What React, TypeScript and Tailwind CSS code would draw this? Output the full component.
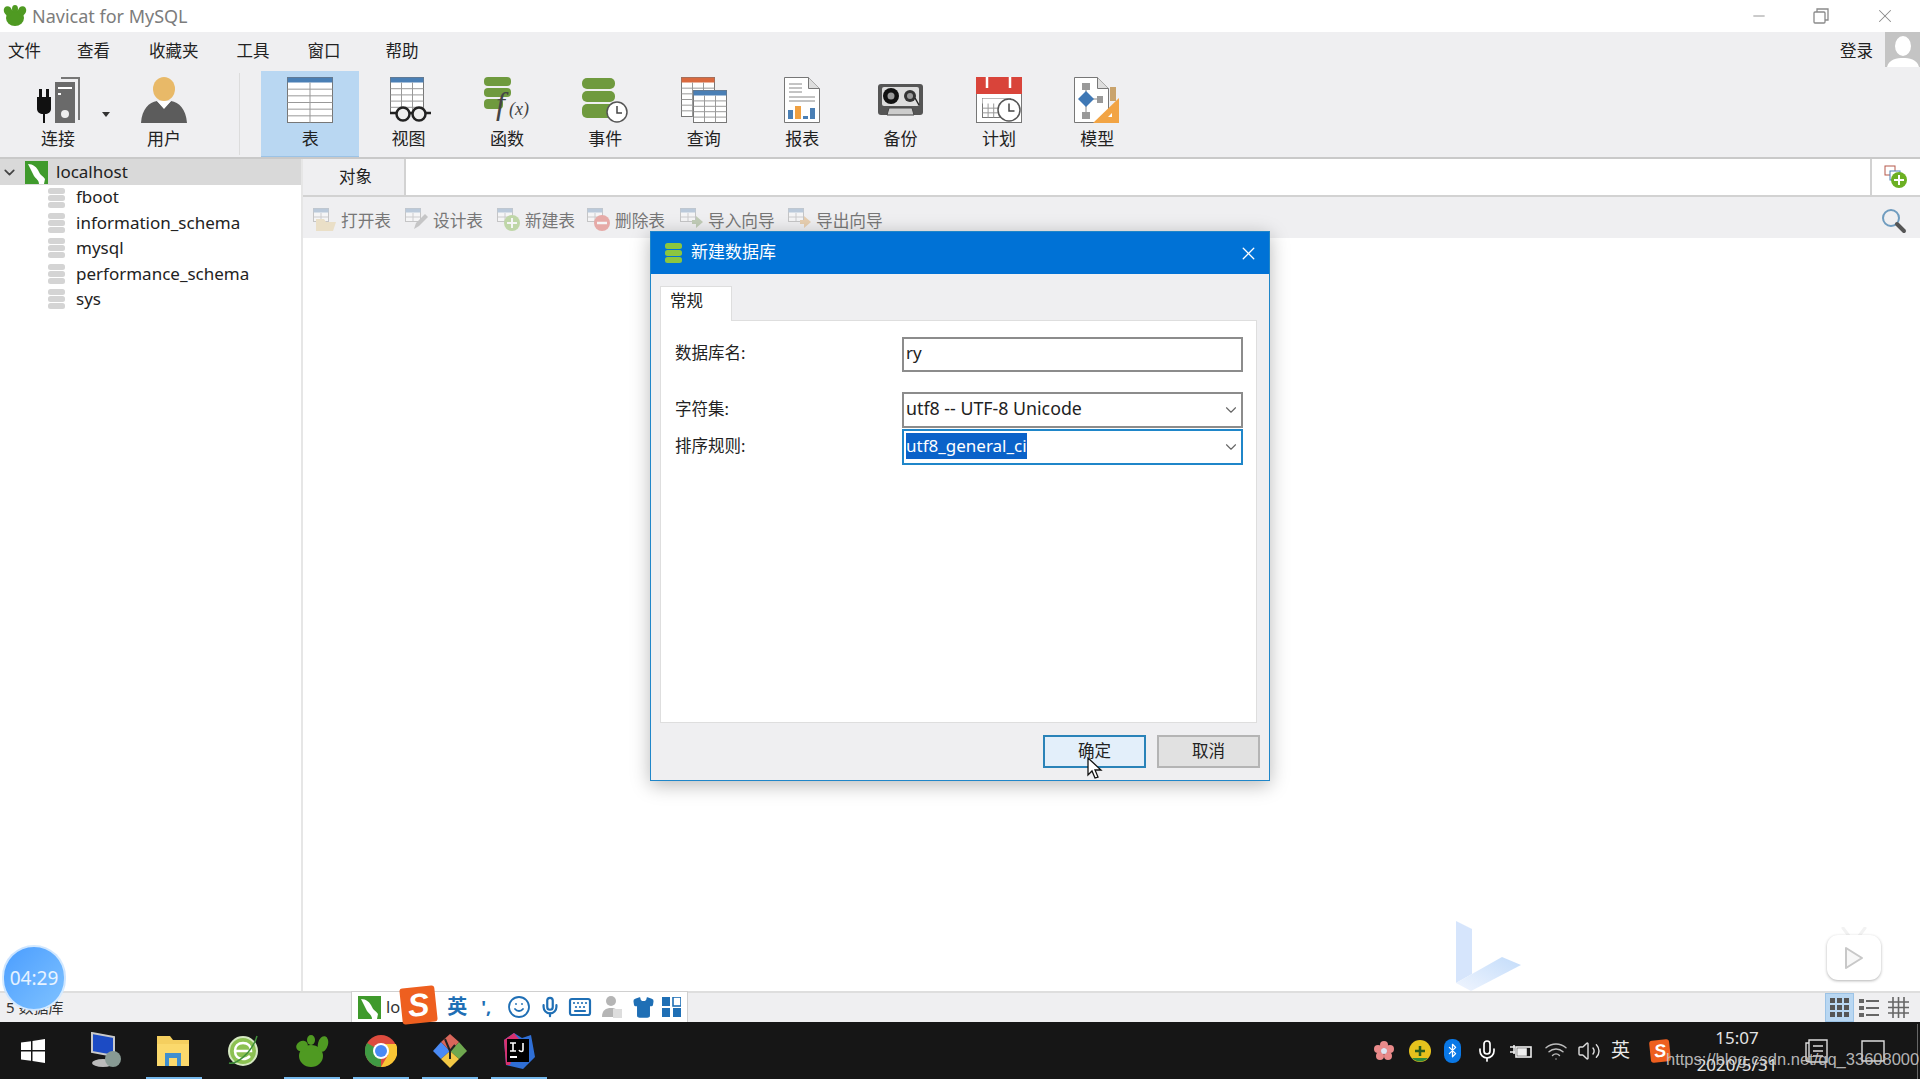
import { ChevronDown, X, Minus, Smile, Mic, Keyboard, Shirt, Volume2, Wifi, Bluetooth } from "lucide-react";
import type { ReactNode } from "react";

const Grid = ({ x, y, w, h, cols, rows, head = "#4a7fb5" }: { x: number; y: number; w: number; h: number; cols: number; rows: number; head?: string }) => (
  <g>
    <rect x={x} y={y} width={w} height={h} fill="#fff" stroke="#777" />
    <rect x={x} y={y} width={w} height={5} fill={head} />
    {Array.from({ length: rows - 1 }, (_, i) => (
      <line key={i} x1={x} x2={x + w} y1={y + 5 + ((h - 5) / rows) * (i + 1)} y2={y + 5 + ((h - 5) / rows) * (i + 1)} stroke="#999" />
    ))}
    {Array.from({ length: cols - 1 }, (_, i) => (
      <line key={i} y1={y + 5} y2={y + h} x1={x + (w / cols) * (i + 1)} x2={x + (w / cols) * (i + 1)} stroke="#999" />
    ))}
  </g>
);

const Svg = ({ children }: { children: ReactNode }) => (
  <svg width="46" height="46" viewBox="0 0 46 46">{children}</svg>
);

const Cyl = ({ fill = "#6f9a3e" }: { fill?: string }) => (
  <g fill={fill}>
    <rect x="0" y="1" width="33" height="11" rx="5" />
    <rect x="0" y="14" width="33" height="11" rx="5" />
    <rect x="0" y="27" width="33" height="14" rx="5" />
  </g>
);

const Clock = ({ cx, cy, r }: { cx: number; cy: number; r: number }) => (
  <g>
    <circle cx={cx} cy={cy} r={r} fill="#fff" stroke="#555" strokeWidth="1.5" />
    <path d={`M${cx} ${cy - r * 0.6}V${cy + 1}H${cx + r * 0.5}`} fill="none" stroke="#444" strokeWidth="1.5" />
  </g>
);

const tools: { label: string; icon: ReactNode; on?: boolean }[] = [
  { label: "表", on: true, icon: <Svg><Grid x={0.5} y={0.5} w={45} h={45} cols={2} rows={6} /></Svg> },
  {
    label: "视图",
    icon: (
      <Svg>
        <Grid x={4.5} y={0.5} w={33} h={36} cols={3} rows={5} />
        <g fill="#eee" stroke="#222" strokeWidth="2.5">
          <circle cx="17" cy="37" r="6.5" />
          <circle cx="33" cy="37" r="6.5" />
          <path d="M23 36h4M10 36H4M40 36h5" />
        </g>
      </Svg>
    ),
  },
  {
    label: "函数",
    icon: (
      <Svg>
        <g fill="#6f9a3e">
          <rect x="0" y="0" width="27" height="9" rx="4" />
          <rect x="0" y="11" width="27" height="9" rx="4" />
          <rect x="0" y="22" width="19" height="10" rx="4" />
        </g>
        <text x="12" y="37" fontFamily="Liberation Serif" fontStyle="italic" fontSize="32" fill="#444">f</text>
        <text x="25" y="38" fontFamily="Liberation Serif" fontStyle="italic" fontSize="18" fill="#444">(x)</text>
      </Svg>
    ),
  },
  { label: "事件", icon: <Svg><Cyl /><Clock cx={35} cy={35} r={10} /></Svg> },
  {
    label: "查询",
    icon: (
      <Svg>
        <Grid x={0.5} y={0.5} w={33} h={39} cols={3} rows={6} head="#d9693f" />
        <Grid x={12.5} y={13.5} w={33} h={32} cols={3} rows={5} />
      </Svg>
    ),
  },
  {
    label: "报表",
    icon: (
      <Svg>
        <path d="M5.5.5h24l11 11v34h-35z" fill="#fff" stroke="#777" />
        <path d="M29.5.5v11h11" fill="#ddd" stroke="#777" />
        <path d="M10 7h13M10 11h13M10 15h13M10 20h26M10 24h26" stroke="#888" />
        <rect x="9" y="33" width="5" height="9" fill="#4a7fb5" />
        <rect x="16" y="29" width="6" height="13" fill="#f0a040" />
        <rect x="24" y="39" width="5" height="3" fill="#4a7fb5" />
        <rect x="31" y="31" width="5" height="11" fill="#4a7fb5" />
      </Svg>
    ),
  },
  {
    label: "备份",
    icon: (
      <Svg>
        <rect x="0" y="7" width="45" height="31" rx="3" fill="#555" />
        <rect x="4" y="10" width="37" height="19" rx="2" fill="#ddd" />
        <circle cx="13" cy="19" r="8" fill="#111" />
        <circle cx="13" cy="19" r="3.5" fill="#999" />
        <circle cx="32" cy="19" r="6" fill="#333" />
        <circle cx="32" cy="19" r="3" fill="#999" />
        <path d="M37 21l4 7" stroke="#222" strokeWidth="1.5" />
        <path d="M9 38l2-7h23l2 7z" fill="#ccc" stroke="#444" />
      </Svg>
    ),
  },
  {
    label: "计划",
    icon: (
      <Svg>
        <rect x="0.5" y="0.5" width="45" height="45" fill="#fff" stroke="#777" />
        <rect x="0" y="0" width="46" height="17" fill="#d9443a" />
        <path d="M11 0v11M34 0v11" stroke="#fff" strokeWidth="2.5" />
        <Grid x={6.5} y={21.5} w={28} h={19} cols={5} rows={3} head="#fff" />
        <Clock cx={33} cy={33} r={11} />
      </Svg>
    ),
  },
  {
    label: "模型",
    icon: (
      <Svg>
        <path d="M.5.5h23l11 11v34H.5z" fill="#fff" stroke="#777" />
        <path d="M23.5.5v11h11" fill="#ddd" stroke="#777" />
        <path d="M12 8v30M12 22h14" stroke="#888" />
        <rect x="8" y="6" width="8" height="7" fill="#999" />
        <rect x="8" y="35" width="8" height="7" fill="#999" />
        <rect x="23" y="19" width="6" height="7" fill="#999" />
        <path d="M12 14l8 8-8 8-8-8z" fill="#3f78b5" />
        <rect x="36" y="10" width="6" height="14" fill="#c9a36c" />
        <path d="M45 21v25H19z" fill="#f2a444" />
        <path d="M38 36v4h-4z" fill="#fff" />
      </Svg>
    ),
  },
];

const MiniTable = ({ children }: { children?: ReactNode }) => (
  <svg width="24" height="24" viewBox="0 0 24 24" className="opacity-40">
    <rect x="0.5" y="0.5" width="15" height="13" fill="#fff" stroke="#888" />
    <rect x="0.5" y="0.5" width="15" height="4" fill="#6d93b8" />
    <path d="M8 5v8M1 9h14" stroke="#999" />
    {children}
  </svg>
);

const actions: { label: string; w: string; icon: ReactNode }[] = [
  { label: "打开表", w: "w-[92px]", icon: <MiniTable><path d="M3 11h8l2 3h10l-3 9H3z" fill="#e4c88a" /></MiniTable> },
  { label: "设计表", w: "w-[92px]", icon: <MiniTable><path d="M9 21l2-6 9-9 3 3-9 9z" fill="#888" /></MiniTable> },
  { label: "新建表", w: "w-[90px]", icon: <MiniTable><circle cx="15" cy="15" r="8" fill="#7ab33c" /><path d="M15 10v10M10 15h10" stroke="#fff" strokeWidth="2" /></MiniTable> },
  { label: "删除表", w: "w-[93px]", icon: <MiniTable><circle cx="15" cy="15" r="8" fill="#d9443a" /><path d="M10 15h10" stroke="#fff" strokeWidth="2.5" /></MiniTable> },
  { label: "导入向导", w: "w-[108px]", icon: <MiniTable><path d="M23 14l-7-6v4h-4v4h4v4z" fill="#7f9a62" /></MiniTable> },
  { label: "导出向导", w: "w-auto", icon: <MiniTable><path d="M23 14l-7-6v4h-4v4h4v4z" fill="#e0a050" /></MiniTable> },
];

const databases = ["fboot", "information_schema", "mysql", "performance_schema", "sys"];

const DbIcon = () => (
  <svg width="17" height="20" viewBox="0 0 17 20">
    <g fill="#d4d4d4">
      <rect x="0" y="0" width="17" height="6" rx="2.5" />
      <rect x="0" y="7" width="17" height="6" rx="2.5" />
      <rect x="0" y="14" width="17" height="6" rx="2.5" />
    </g>
  </svg>
);

const MysqlIcon = ({ className = "" }: { className?: string }) => (
  <svg viewBox="0 0 23 23" className={className}>
    <rect width="23" height="23" fill="#3f9a2c" />
    <path d="M3 3c5 0 9 3 11 8 1 3 4 4 6 7l-1 5h-5c0-4-3-5-5-8C7 11 5 7 3 3z" fill="#fff" />
  </svg>
);

const SogouIcon = ({ size, font }: { size: string; font: string }) => (
  <div className={`${size} ${font} -rotate-6 rounded-[3px] bg-[#ee5f1f] flex items-center justify-center font-black italic text-white font-['Liberation_Sans',sans-serif]`}>
    S
  </div>
);

function Dialog() {
  return (
    <div className="absolute left-[650px] top-[231px] w-[620px] h-[550px] border border-[#1f86c9] bg-[#efeff1] shadow-[0_4px_18px_rgba(0,0,0,0.28)] flex flex-col">
      <div className="h-[42px] bg-[#0072d6] flex items-center pl-[14px] pr-[10px] text-white">
        <svg width="17" height="20" viewBox="0 0 17 20" className="mr-[9px]">
          <g fill="#8cc63f">
            <rect y="0" width="17" height="6" rx="2.5" />
            <rect y="7" width="17" height="6" rx="2.5" />
            <rect y="14" width="17" height="6" rx="2.5" />
          </g>
        </svg>
        <span className="text-[17px] pb-[2px]">新建数据库</span>
        <X className="ml-auto" size={21} strokeWidth={1.5} />
      </div>
      <div className="flex-1 flex flex-col pl-[9px] pr-[12px] pt-[12px]">
        <div className="w-[72px] h-[35px] -mb-px z-10 bg-white border border-b-0 border-[#dedede] text-[16.5px] pl-[9px] pt-[2px] text-[#222]">常规</div>
        <div className="h-[403px] bg-white border border-[#dedede] pt-[15px] pl-[14px] pr-[13px] text-[#222]">
          <div className="flex items-center h-[36px]">
            <span className="w-[227px] text-[16.5px] pb-[1px]">数据库名:</span>
            <div className="flex-1 h-[35px] border-2 border-[#8c8c8c] flex items-center pl-[2px] pb-[2px] text-[17px]">ry</div>
          </div>
          <div className="flex items-center h-[36px] mt-[20px]">
            <span className="w-[227px] text-[16.5px] pb-[1px]">字符集:</span>
            <div className="flex-1 h-[36px] border-2 border-[#8c8c8c] flex items-center pl-[2px] pr-[1px] text-[17.8px]">
              <span className="pb-[3px]">utf8 -- UTF-8 Unicode</span>
              <ChevronDown className="ml-auto text-[#666]" size={18} strokeWidth={1.5} />
            </div>
          </div>
          <div className="flex items-center h-[36px] mt-[1px]">
            <span className="w-[227px] text-[16.5px] pb-[1px]">排序规则:</span>
            <div className="flex-1 h-[36px] border-2 border-[#1f86c9] flex items-center pl-[2px] pr-[1px] text-[17px]">
              <span className="bg-[#0a62c9] text-white leading-[26px] mb-[3px]">utf8_general_ci</span>
              <ChevronDown className="ml-auto text-[#666]" size={18} strokeWidth={1.5} />
            </div>
          </div>
        </div>
        <div className="flex justify-end gap-[11px] mt-[12px] -mr-[3px] text-[16.5px] text-[#222]">
          <button className="w-[103px] h-[33px] border-2 border-[#2a83b8] bg-[#e3effa]">确定</button>
          <button className="w-[103px] h-[33px] border-2 border-[#b4b4b4] bg-[#e1e1e1]">取消</button>
        </div>
      </div>
    </div>
  );
}

export default function App() {
  return (
    <div className="relative w-[1920px] h-[1079px] overflow-hidden bg-white flex flex-col font-['Noto_Sans','Noto_Sans_CJK_SC',sans-serif] text-[#222]">
      {/* title bar */}
      <div className="h-[32px] shrink-0 flex items-center pl-[3px] text-[#7c7c7c]">
        <svg width="24" height="22" viewBox="0 0 24 22" className="mr-[5px]">
          <g fill="#4f9a22">
            <ellipse cx="12" cy="13" rx="9" ry="8" />
            <ellipse cx="5" cy="6" rx="4" ry="5" transform="rotate(-25 5 6)" />
            <ellipse cx="19" cy="6" rx="4" ry="5" transform="rotate(25 19 6)" />
            <ellipse cx="12" cy="4" rx="3" ry="4" />
          </g>
        </svg>
        <span className="text-[18px]">Navicat for MySQL</span>
        <div className="ml-auto flex items-center text-[#8a8a8a]">
          <Minus size={18} strokeWidth={1.2} />
          <svg width="16" height="16" viewBox="0 0 16 16" className="ml-[45px]" fill="none" stroke="currentColor" strokeWidth="1.3">
            <rect x="1" y="4" width="11" height="11" rx="1" />
            <path d="M4 4V1h11v11h-3" />
          </svg>
          <X className="ml-[45px] mr-[24px]" size={22} strokeWidth={1.1} />
        </div>
      </div>

      {/* menu + toolbar */}
      <div className="h-[127px] shrink-0 bg-[#efeff1] border-b-2 border-[#c9c9c9] flex flex-col">
        <div className="h-[39px] shrink-0 flex items-center text-[16.5px] relative">
          <span className="ml-[8px]">文件</span>
          <span className="ml-[36px]">查看</span>
          <span className="ml-[39px]">收藏夹</span>
          <span className="ml-[38px]">工具</span>
          <span className="ml-[38px]">窗口</span>
          <span className="ml-[45px]">帮助</span>
          <span className="ml-auto mr-[47px]">登录</span>
          <div className="absolute right-0 top-0 w-[35px] h-[35px] bg-[#c4c4c4] overflow-hidden">
            <svg viewBox="0 0 35 35" width="35" height="35">
              <ellipse cx="18" cy="14" rx="8" ry="10" fill="#fff" />
              <path d="M2 35c2-8 10-9 16-9s14 1 16 9z" fill="#fff" />
            </svg>
          </div>
        </div>
        <div className="flex-1 flex items-stretch">
          <div className="w-[98px] ml-[9px] flex flex-col items-center pt-[6px]">
            <svg width="50" height="46" viewBox="0 0 50 46" className="ml-[2px]">
              <path d="M3 20h2v-8h3v8h4v-8h3v8h2v12c0 3-3 5-6 5v9h-2v-9c-3 0-6-2-6-5z" fill="#111" />
              <rect x="21" y="5" width="20" height="41" fill="#6a6a6a" />
              <path d="M27 1h18v42" fill="none" stroke="#777" strokeWidth="2" />
              <rect x="24" y="10" width="14" height="2" fill="#fff" />
              <rect x="24" y="16" width="3" height="2" fill="#fff" />
              <circle cx="31" cy="37" r="4" fill="#eee" />
            </svg>
            <span className="text-[17px] leading-[26px] mt-[3px]">连接</span>
          </div>
          <svg width="8" height="5" viewBox="0 0 8 5" className="mt-[41px] -ml-[5px]"><path d="M0 0h8L4 5z" fill="#333" /></svg>
          <div className="w-[98px] ml-[5px] flex flex-col items-center pt-[6px]">
            <svg width="46" height="46" viewBox="0 0 46 46">
              <ellipse cx="23" cy="12" rx="11" ry="12" fill="#e8b968" />
              <path d="M0 46c1-14 8-21 16-22l7 7 7-7c8 1 15 8 16 22z" fill="#5c5c5c" />
              <path d="M16 24h14l-7 8z" fill="#fff" />
            </svg>
            <span className="text-[17px] leading-[26px] mt-[3px]">用户</span>
          </div>
          <div className="w-px bg-[#dcdcdc] ml-[26px] mr-[21px] my-[2px]" />
          {tools.map((t) => (
            <div key={t.label} className={`w-[98.4px] flex flex-col items-center pt-[6px] ${t.on ? "bg-[#b9d7f2] border-b border-[#9cc3e6]" : ""}`}>
              {t.icon}
              <span className="text-[17px] leading-[26px] mt-[3px]">{t.label}</span>
            </div>
          ))}
        </div>
      </div>

      {/* main */}
      <div className="flex-1 flex min-h-0">
        <aside className="w-[303px] shrink-0 border-r-2 border-[#e6e6e6] text-[17px]">
          <div className="h-[26px] bg-[#d9d9d9] flex items-center pl-[1px]">
            <ChevronDown size={17} strokeWidth={2.4} className="text-[#444]" />
            <MysqlIcon className="w-[23px] h-[23px] ml-[7px]" />
            <span className="ml-[8px]">localhost</span>
          </div>
          {databases.map((d) => (
            <div key={d} className="h-[25.4px] flex items-center pl-[48px]">
              <DbIcon />
              <span className="ml-[11px] pb-[1px]">{d}</span>
            </div>
          ))}
        </aside>
        <div className="flex-1 flex flex-col min-w-0">
          <div className="h-[38px] shrink-0 flex border-b-2 border-[#d2d2d2]">
            <div className="w-[101px] bg-[#efeff1] flex items-center justify-center pl-[4px] text-[16.5px]">对象</div>
            <div className="flex-1 border-l-2 border-[#d2d2d2]" />
            <div className="w-[50px] border-l-2 border-[#d2d2d2] flex items-center justify-center">
              <svg width="24" height="24" viewBox="0 0 24 24">
                <rect x="1" y="1" width="10" height="9" fill="#fff" stroke="#b5584a" />
                <rect x="6" y="6" width="10" height="9" fill="#fff" stroke="#4a7fb5" />
                <circle cx="15" cy="15" r="8" fill="#6cb023" />
                <path d="M15 10v10M10 15h10" stroke="#fff" strokeWidth="2" />
              </svg>
            </div>
          </div>
          <div className="h-[41px] shrink-0 bg-[#efeff1] flex items-center pl-[10px] pt-[6px] text-[16.7px] text-[#777]">
            {actions.map((a) => (
              <div key={a.label} className={`flex items-center ${a.w}`}>
                {a.icon}
                <span className="ml-[4px]">{a.label}</span>
              </div>
            ))}
            <svg width="26" height="26" viewBox="0 0 26 26" className="ml-auto mr-[13px]" fill="none">
              <circle cx="10" cy="10" r="8" stroke="#6f9cbf" strokeWidth="2" />
              <path d="M16 16l7 7" stroke="#555" strokeWidth="4" strokeLinecap="round" />
            </svg>
          </div>
          <div className="flex-1" />
        </div>
      </div>

      {/* status bar */}
      <div className="h-[31px] shrink-0 bg-[#efeff1] border-t-2 border-[#dedede] flex items-center justify-end pr-[11px] relative">
        <span className="absolute left-[6px] text-[15px] text-[#333]">5 数据库</span>
        <div className="w-[29px] h-[29px] bg-[#b9d7f2] border border-[#9cc3e6] flex items-center justify-center mr-[1px]">
          <svg width="19" height="19" viewBox="0 0 19 19" fill="#555">
            {[0, 7, 14].map((y) => [0, 7, 14].map((x) => <rect key={`${x}${y}`} x={x} y={y} width="5" height="5" />))}
          </svg>
        </div>
        <svg width="20" height="18" viewBox="0 0 20 18" className="mx-[4px]" fill="#666">
          {[0, 7, 14].map((y) => (
            <g key={y}>
              <rect x="0" y={y} width="5" height="4" />
              <rect x="7" y={y + 1} width="13" height="2" />
            </g>
          ))}
        </svg>
        <svg width="21" height="21" viewBox="0 0 21 21" className="ml-[5px]" stroke="#666" strokeWidth="1.6">
          <path d="M5 0v21M10.500 0v21M16 0v21M0 5h21M0 10.500h21M0 16h21" />
        </svg>
      </div>

      {/* taskbar */}
      <div className="h-[57px] shrink-0 bg-[#161616] relative flex items-center text-white">
        <svg width="24" height="24" viewBox="0 0 24 24" className="ml-[21px]" fill="#fff">
          <path d="M0 3.500l10-1.300V11H0zM11.500 2l12.500-2v11H11.500zM0 12.500h10v9.300l-10-1.300zM11.500 12.500H24V24l-12.500-2z" />
        </svg>
        <div className="ml-[40px] w-[40px] flex justify-center">
          <svg width="36" height="38" viewBox="0 0 36 38">
            <path d="M5 1l22 4v19L5 20z" fill="#1c4bc4" stroke="#c9c9c9" strokeWidth="2" />
            <ellipse cx="16" cy="31" rx="11" ry="4" fill="#bbb" />
            <circle cx="26" cy="27" r="8" fill="#889a94" />
          </svg>
        </div>
        <div className="ml-[28px] w-[40px] flex justify-center">
          <svg width="32" height="30" viewBox="0 0 32 30">
            <path d="M0 0h13l3 4h16v26H0z" fill="#f5cf5f" />
            <path d="M0 8h32v22H0z" fill="#fbd96c" />
            <path d="M8 30V17h16v13h-4v-8h-8v8z" fill="#3f8fd0" />
          </svg>
        </div>
        <div className="ml-[30px] w-[40px] flex justify-center">
          <svg width="34" height="36" viewBox="0 0 34 36">
            <circle cx="17" cy="18" r="14" fill="#8cc152" stroke="#d5e8c1" strokeWidth="2" />
            <path d="M9 18h16c0-5-3-8-8-8s-8 3-8 8 3 8 8 8c3 0 5-1 7-3" fill="none" stroke="#fff" strokeWidth="2.5" />
            <path d="M3 30C10 32 26 20 31 3" fill="none" stroke="#3f8f3a" strokeWidth="1.5" />
          </svg>
        </div>
        <div className="ml-[29px] w-[40px] flex justify-center">
          <svg width="34" height="32" viewBox="0 0 34 32" fill="#4f9a22">
            <ellipse cx="16" cy="21" rx="12" ry="11" />
            <ellipse cx="7" cy="11" rx="6" ry="5" transform="rotate(-30 7 11)" />
            <ellipse cx="28" cy="9" rx="5" ry="8" transform="rotate(15 28 9)" />
            <ellipse cx="16" cy="5" rx="4" ry="5" />
          </svg>
        </div>
        <div className="ml-[29px] w-[40px] flex justify-center">
          <svg width="32" height="32" viewBox="-16 -16 32 32">
            <circle r="16" fill="#dd4b3e" />
            <path d="M-13.900 -8 L0 0 L0 16 A16 16 0 0 1 -13.900 -8z" fill="#3f9a43" />
            <path d="M0 -7H14.900A16 16 0 0 1 0 16L7 4z" fill="#f9c534" />
            <circle r="8" fill="#fff" />
            <circle r="6" fill="#4a8af4" />
          </svg>
        </div>
        <div className="ml-[29px] w-[40px] flex justify-center">
          <svg width="34" height="34" viewBox="0 0 34 34">
            <path d="M17 17L8 8 0 17l8 8z" fill="#4a8af4" />
            <path d="M17 17l9-9 8 9-8 8z" fill="#6fa84f" />
            <path d="M17 17l-9 8 9 9 9-9z" fill="#f3c845" />
            <path d="M17 17L8 8l9-8 9 8z" fill="#d9665a" />
            <path d="M12 5l5 12v8M22 11l-5 6" stroke="#222" strokeWidth="2" fill="none" />
          </svg>
        </div>
        <div className="ml-[28px] w-[40px] flex justify-center">
          <svg width="34" height="38" viewBox="0 0 34 38">
            <path d="M3 8l10-7 8 5 9-3 4 22-12 12L5 33z" fill="#2f6fd6" />
            <path d="M3 8l10-7 5 6-9 26-4 0z" fill="#d8316f" />
            <rect x="6" y="7" width="22" height="23" fill="#000" />
            <path d="M9 11h6M12 11v8M9 19h6M22 11v7c0 2-3 2-4 0" stroke="#fff" strokeWidth="1.6" fill="none" />
            <path d="M9 25h7" stroke="#fff" strokeWidth="2" />
          </svg>
        </div>

        {/* running-app marks */}
        {["left-[146px]", "left-[284px]", "left-[353px]", "left-[422px]", "left-[491px]"].map((l) => (
          <div key={l} className={`absolute bottom-0 h-[2px] w-[56px] bg-[#76b9ed] ${l}`} />
        ))}

        {/* tray */}
        <div className="ml-auto flex items-center h-full relative">
          <svg width="20" height="20" viewBox="0 0 20 20" className="mr-[15px]" fill="#e98a8a">
            <circle cx="10" cy="4" r="4" /><circle cx="16" cy="8" r="4" /><circle cx="14" cy="15" r="4" /><circle cx="6" cy="15" r="4" /><circle cx="4" cy="8" r="4" />
            <circle cx="10" cy="10" r="3" fill="#dfe5f2" />
          </svg>
          <svg width="22" height="22" viewBox="0 0 22 22" className="mr-[13px]">
            <circle cx="11" cy="11" r="11" fill="#e6c21d" />
            <path d="M3 18a11 11 0 0 0 16 0z" fill="#2f8a3c" />
            <path d="M11 6v10M6 11h10" stroke="#2b5c1d" strokeWidth="2.5" />
          </svg>
          <div className="w-[17px] h-[24px] mr-[14px] rounded-[8px] bg-[#0a78e6] flex items-center justify-center">
            <Bluetooth size={15} strokeWidth={2} />
          </div>
          <Mic size={24} strokeWidth={1.7} className="mr-[10px]" />
          <svg width="24" height="18" viewBox="0 0 24 18" className="mr-[11px]" fill="none" stroke="#eee" strokeWidth="1.6">
            <path d="M1 5h5M1 10h5M5 3v9" />
            <rect x="7" y="5" width="15" height="10" />
            <rect x="9" y="7" width="8" height="6" fill="#eee" />
          </svg>
          <Wifi size={24} strokeWidth={1.4} className="mr-[9px] text-[#bdbdbd]" />
          <Volume2 size={24} strokeWidth={1.4} className="mr-[10px] text-[#dedede]" />
          <span className="text-[19px] mr-[20px] text-[#e8e8e8]">英</span>
          <SogouIcon size="w-[20px] h-[22px]" font="text-[18px]" />
          <div className="w-[114px] ml-[10px] flex flex-col items-center text-[17px] leading-[27px] text-[#e4e4e4] pt-[1px]">
            <span>15:07</span>
            <span>2020/5/31</span>
          </div>
          <svg width="24" height="24" viewBox="0 0 24 24" className="ml-[11px]" fill="none" stroke="#ddd" strokeWidth="1.4">
            <path d="M4 1h18v22H4zM4 4H1v16q0 3 3 3M8 7h10M8 12h10M8 17h10" />
          </svg>
          <svg width="24" height="22" viewBox="0 0 24 22" className="ml-[32px] mr-[35px]" fill="none" stroke="#ddd" strokeWidth="1.4">
            <path d="M1 1h22v20H1z" />
          </svg>
          <div className="absolute right-[2px] top-[2px] bottom-0 w-px bg-[#666]" />
        </div>
      </div>

      {/* floating overlays */}
      <Dialog />

      <svg className="absolute left-[1087px] top-[757px]" width="18" height="24" viewBox="0 0 18 24">
        <path d="M1 1v17l4-4 3 7 3-1-3-7h6z" fill="#fff" stroke="#111" strokeWidth="1.3" />
      </svg>

      <div className="absolute left-[2px] top-[945px] w-[64px] h-[66px] rounded-full bg-linear-to-br from-[#4a9dff] to-[#7fc2ff] border-2 border-white/70 flex items-center justify-center text-[19px] text-white/85">
        04:29
      </div>

      <div className="absolute left-[351px] top-[991px] w-[337px] h-[31px] bg-white border-l border-t border-r border-[#d0d0d0] flex items-center pl-[6px] text-[#1f6fb5]">
        <MysqlIcon className="w-[23px] h-[23px]" />
        <span className="ml-[5px] text-[16.5px] text-[#333]">lo</span>
        <div className="ml-[47px] text-[20px] font-bold">英</div>
        <span className="ml-[14px] text-[18px] font-bold">',</span>
        <Smile className="ml-[16px]" size={24} strokeWidth={1.8} />
        <Mic className="ml-[8px]" size={22} strokeWidth={2.4} />
        <Keyboard className="ml-[7px]" size={24} strokeWidth={2.2} />
        <svg width="22" height="24" viewBox="0 0 22 24" className="ml-[9px]" fill="#b5b5b5">
          <circle cx="10" cy="6" r="5" />
          <path d="M1 22c0-7 4-9 9-9s8 2 8 9z" />
          <rect x="12" y="14" width="9" height="9" fill="#ddd" />
        </svg>
        <Shirt className="ml-[9px]" size={23} fill="#1f6fb5" strokeWidth={1.5} />
        <svg width="19" height="20" viewBox="0 0 19 20" className="ml-[7px]" fill="#1f6fb5">
          <rect width="8" height="9" /><rect x="11" width="8" height="9" fill="none" stroke="#1f6fb5" strokeWidth="1.6" /><rect y="11" width="8" height="9" /><rect x="11" y="11" width="8" height="9" />
        </svg>
      </div>
      <div className="absolute left-[401px] top-[987px]">
        <SogouIcon size="w-[35px] h-[36px]" font="text-[32px]" />
      </div>

      {/* player watermarks */}
      <svg className="absolute left-[1453px] top-[917px]" width="72" height="76" viewBox="0 0 72 76">
        <defs>
          <linearGradient id="bing" x1="0" y1="1" x2="1" y2="0">
            <stop offset="0" stopColor="#f0f5fe" />
            <stop offset="1" stopColor="#c3dcfa" />
          </linearGradient>
        </defs>
        <path d="M3 4l16 8v45L3 66z" fill="#cfe1fb" opacity="0.85" />
        <path d="M3 66l46-26 19 8-50 26z" fill="url(#bing)" />
      </svg>
      <svg className="absolute left-[1838px] top-[927px]" width="32" height="10" viewBox="0 0 32 10" fill="none" stroke="#f2f2f2" strokeWidth="3" strokeLinecap="round">
        <path d="M5 1l6 8M27 1l-6 8" />
      </svg>
      <div className="absolute left-[1827px] top-[935px] w-[54px] h-[45px] rounded-[11px] bg-white shadow-[0_1px_3px_rgba(0,0,0,0.3)] flex items-center justify-center">
        <svg width="22" height="24" viewBox="0 0 22 24" fill="#f7f7f7" stroke="#c8c8c8" strokeWidth="2" strokeLinejoin="round">
          <path d="M3 2l16 10L3 22z" />
        </svg>
      </div>
      <div className="absolute left-[1666px] top-[1047px] text-[16.500px] leading-[24px] text-[#c8c8c8]/90 font-['Liberation_Sans',sans-serif] whitespace-nowrap">
        https://blog.csdn.net/qq_33608000
      </div>
    </div>
  );
}
